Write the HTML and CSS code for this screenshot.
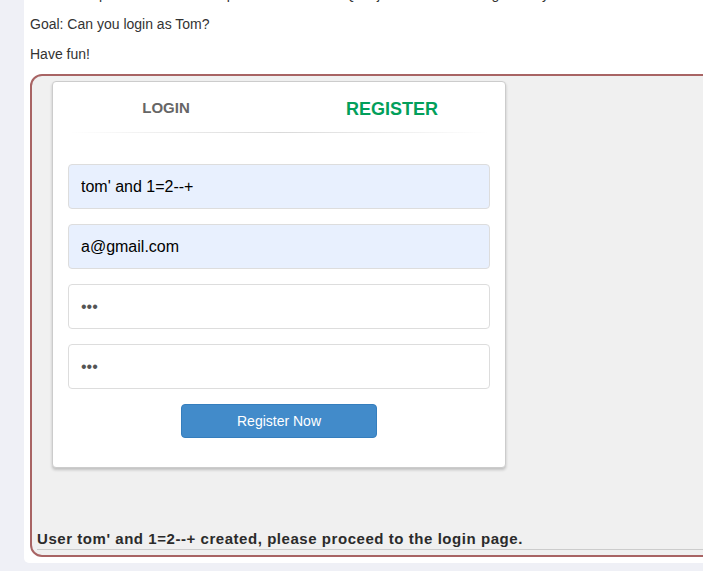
FILE: index.html
```html
<!DOCTYPE html>
<html lang="en">
<head>
<meta charset="utf-8">
<title>SQL Injection (advanced)</title>
<link rel="stylesheet" href="styles.css">
</head>
<body>
<div class="panel">
  <p class="intro">We now explained the basic steps involved in an SQL injection. In this assignment you will need to combine all the things we explained in the SQL lessons.</p>
  <p>Goal: Can you login as Tom?</p>
  <p>Have fun!</p>
  <div class="attack">
    <div class="card">
      <div class="card-head">
        <div class="tabs">
          <a class="tab">Login</a>
          <a class="tab active">Register</a>
        </div>
        <hr class="divider">
      </div>
      <form class="card-body">
        <input class="field autofill" type="text" value="tom' and 1=2--+">
        <input class="field autofill" type="email" value="a@gmail.com">
        <input class="field" type="password" value="abc">
        <input class="field" type="password" value="abc">
        <button class="btn" type="button">Register Now</button>
      </form>
    </div>
    <div class="feedback">User tom' and 1=2--+ created, please proceed to the login page.</div>
  </div>
</div>
</body>
</html>
```
FILE: styles.css
```css
html, body {
  margin: 0;
  height: 100%;
  overflow: hidden;
}
body {
  background: #eff0f6;
  font-family: "Liberation Sans", Arial, sans-serif;
  font-size: 14px;
  line-height: 20px;
  color: #333;
}
.panel {
  display: flow-root;
  margin-left: 24px;
  width: 1100px;
  background: #fff;
  padding: 0 0 6px 6px;
  border-bottom-left-radius: 5px;
}
.panel p {
  margin: 0 0 10px;
}
.panel .intro {
  margin-top: -16px;
  white-space: nowrap;
}
.attack {
  display: flow-root;
  border: 2px solid #a86464;
  border-radius: 12px;
  background: #f0f0f0;
  padding: 5px 0;
}
.card {
  margin-left: 20px;
  margin-bottom: 61px;
  width: 452px;
  border: 1px solid #ccc;
  border-radius: 4px;
  background: #fff;
  box-shadow: 0 2px 3px rgba(0, 0, 0, 0.2);
}
.card-head {
  padding-top: 17px;
}
.tabs {
  display: flex;
  align-items: flex-start;
}
.tab {
  flex: 1;
  text-align: center;
  font-weight: bold;
  text-transform: uppercase;
  color: #666;
  font-size: 15px;
  line-height: normal;
}
.tab.active {
  color: #029f5b;
  font-size: 18px;
}
.divider {
  margin: 12px 15px 0;
  border: 0;
  height: 1px;
  background: linear-gradient(to right, rgba(0, 0, 0, 0), rgba(0, 0, 0, 0.15), rgba(0, 0, 0, 0));
}
.card-body {
  display: flex;
  flex-direction: column;
  align-items: center;
  gap: 15px;
  padding: 31px 15px 29px;
  margin: 0;
}
.field {
  box-sizing: border-box;
  width: 100%;
  height: 45px;
  margin: 0;
  padding: 6px 12px;
  border: 1px solid #ddd;
  border-radius: 4px;
  background: #fff;
  color: #555;
  font: 16px "Liberation Sans", Arial, sans-serif;
  outline: none;
}
.field.autofill {
  background: #e8f0fe;
  color: #000;
}
.btn {
  box-sizing: border-box;
  width: 196px;
  height: 34px;
  margin: 0;
  padding: 6px 12px;
  border: 1px solid #357ebd;
  border-radius: 4px;
  background: #428bca;
  color: #fff;
  font: 14px "Liberation Sans", Arial, sans-serif;
}
.feedback {
  margin-left: 5px;
  border-bottom: 1px solid #ccc;
  font-size: 15px;
  font-weight: bold;
  letter-spacing: 0.55px;
  color: #2b2b2b;
}
```
